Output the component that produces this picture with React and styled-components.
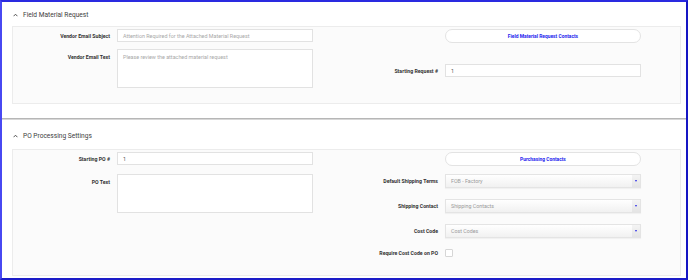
import React from 'react'
import styled, { createGlobalStyle } from 'styled-components'

const Global = createGlobalStyle`
  html, body { margin: 0; padding: 0; background: #fff; }
  * { box-sizing: border-box; }
`

const Frame = styled.div`
  width: 688px;
  height: 280px;
  border: 2px solid #2a2ae0;
  border-left-color: #4848f2;
  border-right-color: #1616c4;
  border-bottom-color: #1c1cc8;
  background: #dedede;
  display: flex;
  flex-direction: column;
  gap: 2px;
  overflow: hidden;
  font-family: Roboto, "Liberation Sans", sans-serif;
`

const Card = styled.section`
  background: #fff;
  height: ${p => p.$height}px;
  padding: 0 5px 0 10px;
  box-shadow: 0 1px 1px rgba(0, 0, 0, 0.18);
  display: flex;
  flex-direction: column;
  flex-shrink: 0;
`

const Header = styled.div`
  height: ${p => p.$height}px;
  padding-top: ${p => p.$offset}px;
  display: flex;
  align-items: center;
  padding-left: 1px;
  gap: 5px;
  color: #3d3d3d;
  font-size: 6.6px;
`

const Chevron = styled.svg`
  width: 5px;
  height: 4px;
`

const Panel = styled.div`
  height: ${p => p.$height}px;
  background: #fbfbfb;
  border: 1px solid #ececec;
  display: flex;
  padding-top: 2px;
`

const Column = styled.div`
  width: ${p => p.$width}px;
  display: flex;
  flex-direction: column;
`

const Row = styled.div`
  display: grid;
  grid-template-columns: ${p => p.$label}px 196px;
  column-gap: 7px;
  align-items: ${p => (p.$top ? 'start' : 'center')};
  margin-top: ${p => p.$mt || 0}px;
`

const Label = styled.label`
  text-align: right;
  font-weight: 700;
  font-size: 5.2px;
  color: #333;
  padding-top: ${p => (p.$top ? 5 : 0)}px;
`

const Input = styled.div`
  height: 13px;
  border: 1px solid #e2e2e2;
  background: #fff;
  font-size: 5.4px;
  color: ${p => (p.$placeholder ? '#a8a8a8' : '#555')};
  display: flex;
  align-items: center;
  padding-left: 5px;
`

const TextArea = styled.div`
  height: 39px;
  border: 1px solid #e2e2e2;
  background: #fff;
  font-size: 5.4px;
  color: #a8a8a8;
  padding: 4px 5px;
`

const PillButton = styled.button`
  grid-column: 2;
  height: 14px;
  border: 1px solid #e3e3e3;
  border-radius: 7px;
  background: #fff;
  font-family: inherit;
  font-weight: 700;
  font-size: 4.9px;
  color: #2424ee;
  padding: 0;
`

const Select = styled.div`
  height: 14px;
  border: 1px solid #e4e4e4;
  background: linear-gradient(#ffffff, #f1f1f1);
  display: flex;
  align-items: center;
  font-size: 5.3px;
  color: #9a9a9a;
  box-shadow: 0 1px 1px rgba(0, 0, 0, 0.04);
`

const SelectText = styled.span`
  flex: 1;
  padding-left: 5px;
`

const Arrow = styled.span`
  width: 8px;
  height: 100%;
  background: linear-gradient(#f4f4f4, #e4e4e4);
  display: flex;
  align-items: center;
  justify-content: center;
  &::after {
    content: '';
    border-left: 1.5px solid transparent;
    border-right: 1.5px solid transparent;
    border-top: 2px solid #2a2ae8;
  }
`

const Checkbox = styled.span`
  width: 8px;
  height: 8px;
  border: 1px solid #d6d6d6;
  border-radius: 1px;
  background: #fff;
`

const Section = ({ title, cardHeight, headerHeight, headerOffset, panelHeight, children }) => (
  <Card $height={cardHeight}>
    <Header $height={headerHeight} $offset={headerOffset}>
      <Chevron viewBox="0 0 5 4">
        <path d="M0.6 3.2 L2.5 1.2 L4.4 3.2" fill="none" stroke="#444" strokeWidth="0.9" />
      </Chevron>
      <span>{title}</span>
    </Header>
    <Panel $height={panelHeight}>{children}</Panel>
  </Card>
)

const SelectBox = ({ value }) => (
  <Select>
    <SelectText>{value}</SelectText>
    <Arrow />
  </Select>
)

export default function App() {
  return (
    <>
      <Global />
      <Frame>
        <Section title="Field Material Request" cardHeight={116} headerHeight={24} headerOffset={1} panelHeight={78}>
          <Column $width={300}>
            <Row $label={97}>
              <Label>Vendor Email Subject</Label>
              <Input $placeholder>Attention Required for the Attached Material Request</Input>
            </Row>
            <Row $label={97} $top $mt={7}>
              <Label $top>Vendor Email Text</Label>
              <TextArea>Please review the attached material request</TextArea>
            </Row>
          </Column>
          <Column $width={328}>
            <Row $label={125}>
              <PillButton>Field Material Request Contacts</PillButton>
            </Row>
            <Row $label={125} $mt={21}>
              <Label>Starting Request #</Label>
              <Input>1</Input>
            </Row>
          </Column>
        </Section>
        <Section title="PO Processing Settings" cardHeight={158} headerHeight={29} headerOffset={3} panelHeight={127}>
          <Column $width={300}>
            <Row $label={97}>
              <Label>Starting PO #</Label>
              <Input>1</Input>
            </Row>
            <Row $label={97} $top $mt={9}>
              <Label $top>PO Text</Label>
              <TextArea />
            </Row>
          </Column>
          <Column $width={328}>
            <Row $label={125}>
              <PillButton>Purchasing Contacts</PillButton>
            </Row>
            <Row $label={125} $mt={8}>
              <Label>Default Shipping Terms</Label>
              <SelectBox value="FOB - Factory" />
            </Row>
            <Row $label={125} $mt={11}>
              <Label>Shipping Contact</Label>
              <SelectBox value="Shipping Contacts" />
            </Row>
            <Row $label={125} $mt={11}>
              <Label>Cost Code</Label>
              <SelectBox value="Cost Codes" />
            </Row>
            <Row $label={125} $mt={11}>
              <Label>Require Cost Code on PO</Label>
              <Checkbox />
            </Row>
          </Column>
        </Section>
      </Frame>
    </>
  )
}
